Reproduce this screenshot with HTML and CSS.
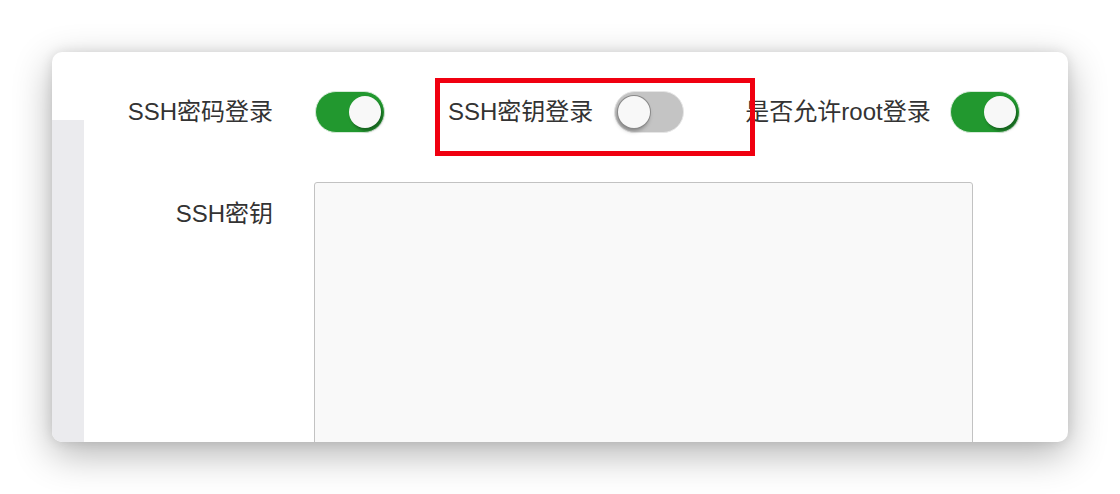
FILE: index.html
```html
<!DOCTYPE html>
<html lang="zh-CN">
<head>
<meta charset="utf-8">
<title>SSH设置</title>
<link rel="stylesheet" href="styles.css">
</head>
<body>
<div class="window">
  <div class="sidebar"><div class="sidebar-fill"></div></div>
  <div class="content">
    <div class="switch-row">
      <div class="item item-first">
        <span class="label label-fixed">SSH密码登录</span>
        <span class="switch on"><span class="knob"></span></span>
      </div>
      <div class="item">
        <span class="label">SSH密钥登录</span>
        <span class="switch off"><span class="knob"></span></span>
      </div>
      <div class="item item-last">
        <span class="label">是否允许root登录</span>
        <span class="switch on"><span class="knob"></span></span>
      </div>
    </div>
    <div class="key-row">
      <span class="label label-fixed key-label">SSH密钥</span>
      <textarea class="key-input"></textarea>
    </div>
  </div>
  <div class="highlight"></div>
</div>
</body>
</html>
```

FILE: styles.css
```css
html, body {
  margin: 0;
  padding: 0;
  background: #ffffff;
}
body {
  width: 1120px;
  height: 494px;
  overflow: hidden;
  font-family: "Liberation Sans", "Noto Sans CJK SC", sans-serif;
  color: #333333;
}
.window {
  position: relative;
  margin: 52px 0 0 52px;
  width: 1016px;
  height: 390px;
  background: #ffffff;
  border-radius: 10px;
  overflow: hidden;
  display: flex;
  box-shadow: 0 12px 38px rgba(0, 0, 0, 0.30), 0 0 12px rgba(0, 0, 0, 0.10);
}
.sidebar {
  width: 32px;
  flex: none;
  padding-top: 68px;
  display: flex;
  flex-direction: column;
}
.sidebar-fill {
  flex: 1;
  background: #ebebee;
}
.content {
  flex: 1;
  display: flex;
  flex-direction: column;
}
.switch-row {
  display: flex;
  align-items: center;
  margin-top: 39px;
  height: 42px;
}
.item {
  display: flex;
  align-items: center;
  margin-left: 63px;
}
.item-first {
  margin-left: 0;
}
.item-last {
  margin-left: 61px;
}
.item-last .label {
  margin-right: 19px;
}
.label {
  font-size: 24px;
  line-height: 30px;
  white-space: nowrap;
  margin-right: 21px;
}
.label-fixed {
  width: 189px;
  text-align: right;
  margin-right: 42px;
}
.switch {
  position: relative;
  display: block;
  width: 70px;
  height: 42px;
  border-radius: 21px;
  box-sizing: border-box;
  border: 1px solid #e3e3e3;
}
.switch.on {
  background: #22982f;
  border-color: #d6ead8;
}
.switch.off {
  background: #c4c4c4;
  border-color: #e6e6e6;
}
.knob {
  position: absolute;
  top: 4px;
  width: 32px;
  height: 32px;
  border-radius: 50%;
  background: #f8f8f8;
}
.switch.on .knob {
  right: 3px;
  box-shadow: 2px 3px 3px rgba(0, 0, 0, 0.35);
}
.switch.off .knob {
  left: 3px;
  box-shadow: 0 0 0 1px #8a8a8a, -1px 3px 4px rgba(0, 0, 0, 0.35);
}
.key-row {
  display: flex;
  align-items: flex-start;
  margin-top: 49px;
}
.key-label {
  padding-top: 17px;
  margin-right: 41px;
}
.key-input {
  display: block;
  width: 659px;
  height: 300px;
  box-sizing: border-box;
  margin: 0;
  border: 1px solid #c2c2c2;
  border-radius: 3px;
  background: #f9f9f9;
  resize: none;
  outline: none;
}
.highlight {
  position: absolute;
  left: 383px;
  top: 26px;
  width: 320px;
  height: 78px;
  box-sizing: border-box;
  border: 5px solid #f00010;
  pointer-events: none;
}
```
